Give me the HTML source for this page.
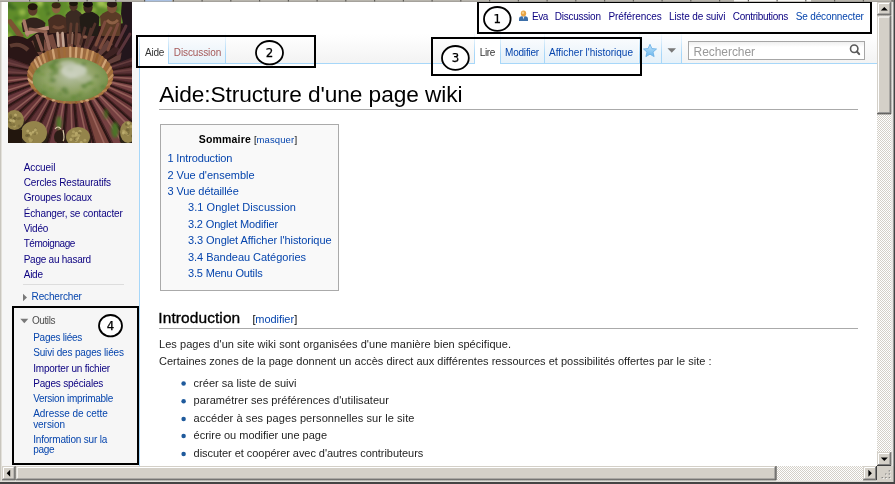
<!DOCTYPE html>
<html lang="fr"><head><meta charset="utf-8"><title>Aide:Structure d'une page wiki</title>
<style>
html,body{margin:0;padding:0}
body{width:895px;height:484px;overflow:hidden;position:relative;background:#fff;font-family:"Liberation Sans",sans-serif}
.abs{position:absolute;display:block}
.t{position:absolute;white-space:nowrap;line-height:1;display:block}
#page{position:absolute;left:0;top:0;width:895px;height:484px;overflow:hidden}
#side{left:2px;top:2px;width:137px;height:464px;background:#f6f6f6}
#sidefade{left:2px;top:2px;width:137px;height:62px;background:linear-gradient(#fff 0,#fff 40%,#f6f6f6 100%)}
#cborder{left:139px;top:63px;width:1px;height:403px;background:#a7d7f9}
#headline{left:139px;top:63px;width:738px;height:1px;background:#a7d7f9}
.box{position:absolute;border:solid #000;box-sizing:border-box}
.tab{position:absolute;top:32px;height:31px;background:linear-gradient(#fff 0,#f3f8fc 45%,#e6f1f9 100%)}
.tabsel{position:absolute;top:32px;height:32px;background:#fff}
.sep{position:absolute;top:32px;width:1px;height:32px;background:linear-gradient(rgba(167,215,249,0) 0,#a7d7f9 70%)}
.hfade{position:absolute;top:34px;height:29px;background:linear-gradient(#fff,#f3f3f3)}
</style></head><body><div id="page">
<!-- backgrounds -->
<div class="abs" id="side"></div><div class="abs" id="sidefade"></div>
<div class="abs" id="headline"></div><div class="abs" id="cborder"></div>
<div class="hfade" style="left:140px;width:737px"></div>
<!-- left tabs -->
<div class="tabsel" style="left:140px;width:28px"></div>
<div class="tab" style="left:169px;width:56px"></div>
<div class="sep" style="left:139px"></div><div class="sep" style="left:168px"></div><div class="sep" style="left:225px"></div>
<!-- right tabs -->
<div class="tabsel" style="left:475px;width:25px"></div>
<div class="tab" style="left:501px;width:43px"></div>
<div class="tab" style="left:545px;width:93px"></div>
<div class="tab" style="left:640px;width:21px"></div>
<div class="tab" style="left:662px;width:19px"></div>
<div class="sep" style="left:474px"></div><div class="sep" style="left:500px"></div><div class="sep" style="left:544px"></div><div class="sep" style="left:639px"></div><div class="sep" style="left:661px"></div><div class="sep" style="left:681px"></div>
<!-- star + arrow -->
<svg class="abs" style="left:642px;top:43px" width="16" height="15" viewBox="0 0 16 15"><defs><linearGradient id="sg" x1="0" y1="0" x2="0" y2="1"><stop offset="0" stop-color="#c4e3f9"/><stop offset="1" stop-color="#6cb8ee"/></linearGradient></defs><path d="M8 1.3 L9.9 5.6 L14.5 6 L11 9.1 L12.1 13.6 L8 11.2 L3.9 13.6 L5 9.1 L1.5 6 L6.1 5.6 Z" fill="url(#sg)" stroke="#6eb2e6" stroke-width="0.9" stroke-linejoin="round"/></svg>
<svg class="abs" style="left:667px;top:48px" width="10" height="6" viewBox="0 0 10 6"><path d="M0.5 0.3 H9 L4.75 4.8 Z" fill="#797979"/></svg>
<!-- search -->
<div class="abs" style="left:688px;top:41px;width:177px;height:19.3px;box-sizing:border-box;border:1px solid #a6a6a6;background:linear-gradient(#efefef 0,#fff 30%)"></div>
<svg class="abs" style="left:848px;top:43px" width="14" height="13" viewBox="0 0 14 13"><circle cx="6.2" cy="5.75" r="3.7" fill="none" stroke="#5a5a5a" stroke-width="1.6"/><path d="M8.9 8.5 L11.2 11.1" stroke="#5a5a5a" stroke-width="2" stroke-linecap="round"/></svg>
<!-- user icon -->
<svg class="abs" style="left:518px;top:10px" width="11" height="12" viewBox="0 0 11 12"><path d="M1 11 V8.6 Q1 6.5 3.4 6.2 H7.6 Q10 6.5 10 8.6 V11 Z" fill="#3d6fa9"/><path d="M4.6 6.3 L5.5 9.5 L6.4 6.3 Z" fill="#dfe8f2"/><ellipse cx="5.5" cy="3.6" rx="2.7" ry="3" fill="#e9a445"/><ellipse cx="5" cy="2.8" rx="1.2" ry="1.2" fill="#f6cf8a"/></svg>
<!-- title rule -->
<div class="abs" style="left:159px;top:109px;width:699px;height:1px;background:#aaa"></div>
<!-- toc -->
<div class="abs" style="left:160px;top:124px;width:179px;height:167px;box-sizing:border-box;border:1px solid #aaa;background:#f9f9f9"></div>
<!-- h2 rule -->
<div class="abs" style="left:159px;top:328px;width:699px;height:1px;background:#aaa"></div>
<!-- bullets -->
<svg class="abs" style="left:180px;top:378px" width="8" height="86" viewBox="0 0 8 86"><g fill="#1f5a9c"><circle cx="3.6" cy="5.6" r="2.25"/><circle cx="3.6" cy="23.3" r="2.25"/><circle cx="3.6" cy="41.1" r="2.25"/><circle cx="3.6" cy="58" r="2.25"/><circle cx="3.6" cy="76.1" r="2.25"/></g></svg>
<!-- sidebar rule + arrows -->
<div class="abs" style="left:23px;top:284px;width:101px;height:1px;background:#ddd"></div>
<svg class="abs" style="left:22px;top:293px" width="6" height="9" viewBox="0 0 6 9"><path d="M1 0.8 L5 4.5 L1 8.2 Z" fill="#797979"/></svg>
<svg class="abs" style="left:20px;top:318px" width="9" height="6" viewBox="0 0 9 6"><path d="M0.3 0.8 H8.3 L4.3 5.2 Z" fill="#797979"/></svg>
<svg class="abs" style="left:8px;top:2px" width="124" height="141" viewBox="0 0 124 141"><defs><filter id="b1" x="-5%" y="-5%" width="110%" height="110%"><feGaussianBlur stdDeviation="0.6"/></filter><filter id="b2" x="-20%" y="-20%" width="140%" height="140%"><feGaussianBlur stdDeviation="1.4"/></filter><filter id="b3" x="-20%" y="-20%" width="140%" height="140%"><feGaussianBlur stdDeviation="3"/></filter><radialGradient id="gr" cx="0.5" cy="0.45" r="0.62"><stop offset="0" stop-color="#b4bea0"/><stop offset="0.55" stop-color="#8fa264"/><stop offset="1" stop-color="#64843a"/></radialGradient><linearGradient id="leg" x1="0" x2="1"><stop offset="0" stop-color="#b47c5e"/><stop offset="0.25" stop-color="#8e4e44"/><stop offset="1" stop-color="#5e2c30"/></linearGradient><clipPath id="lc"><rect width="124" height="141"/></clipPath></defs><g clip-path="url(#lc)"><rect width="124" height="141" fill="#2c1715"/><g filter="url(#b2)"><rect x="-4" y="-4" width="132" height="48" fill="#5f8c2c"/><ellipse cx="56.1" cy="22.4" rx="4.8" ry="3.4" fill="#3f6a22"/><ellipse cx="106.0" cy="7.6" rx="4.4" ry="3.4" fill="#3f6a22"/><ellipse cx="98.3" cy="3.8" rx="2.9" ry="2.3" fill="#94b846"/><ellipse cx="78.7" cy="23.8" rx="3.2" ry="3.4" fill="#94b846"/><ellipse cx="76.3" cy="6.3" rx="2.0" ry="3.6" fill="#86ab3a"/><ellipse cx="4.4" cy="35.2" rx="3.8" ry="4.3" fill="#4c7a26"/><ellipse cx="54.6" cy="33.7" rx="3.6" ry="3.9" fill="#6f9a30"/><ellipse cx="0.6" cy="3.4" rx="4.0" ry="3.2" fill="#3f6a22"/><ellipse cx="123.5" cy="33.6" rx="4.1" ry="2.9" fill="#a3c452"/><ellipse cx="63.6" cy="1.2" rx="3.7" ry="2.3" fill="#86ab3a"/><ellipse cx="105.0" cy="15.5" rx="4.9" ry="4.5" fill="#86ab3a"/><ellipse cx="26.5" cy="37.1" rx="2.2" ry="3.1" fill="#94b846"/><ellipse cx="49.3" cy="2.9" rx="3.9" ry="4.3" fill="#4c7a26"/><ellipse cx="41.8" cy="12.4" rx="2.0" ry="3.2" fill="#86ab3a"/><ellipse cx="16.7" cy="28.3" rx="2.0" ry="3.4" fill="#6f9a30"/><ellipse cx="22.0" cy="22.4" rx="3.3" ry="2.6" fill="#94b846"/><ellipse cx="95.4" cy="16.8" rx="3.2" ry="3.2" fill="#a3c452"/><ellipse cx="0.1" cy="34.6" rx="4.9" ry="3.8" fill="#86ab3a"/><ellipse cx="26.1" cy="15.8" rx="4.6" ry="3.9" fill="#86ab3a"/><ellipse cx="5.2" cy="5.9" rx="3.3" ry="2.0" fill="#3f6a22"/><ellipse cx="40.8" cy="11.9" rx="2.2" ry="2.3" fill="#3f6a22"/><ellipse cx="78.9" cy="0.6" rx="3.1" ry="3.9" fill="#a3c452"/><ellipse cx="118.9" cy="19.3" rx="3.7" ry="4.6" fill="#a3c452"/><ellipse cx="77.8" cy="12.4" rx="2.7" ry="3.8" fill="#94b846"/><ellipse cx="23.5" cy="29.6" rx="4.8" ry="2.6" fill="#6f9a30"/><ellipse cx="109.4" cy="24.1" rx="3.3" ry="2.3" fill="#86ab3a"/><ellipse cx="63.5" cy="10.2" rx="4.2" ry="3.2" fill="#6f9a30"/><ellipse cx="102.1" cy="23.9" rx="2.9" ry="2.5" fill="#94b846"/><ellipse cx="121.2" cy="5.1" rx="3.4" ry="4.0" fill="#3f6a22"/><ellipse cx="76.2" cy="11.2" rx="4.8" ry="2.6" fill="#86ab3a"/><ellipse cx="8.6" cy="16.5" rx="2.7" ry="2.1" fill="#4c7a26"/><ellipse cx="45.7" cy="22.9" rx="2.4" ry="3.1" fill="#6f9a30"/><ellipse cx="121.6" cy="26.3" rx="4.1" ry="3.8" fill="#a3c452"/><ellipse cx="73.1" cy="36.9" rx="3.4" ry="3.1" fill="#4c7a26"/><ellipse cx="119.4" cy="0.9" rx="3.9" ry="3.4" fill="#94b846"/><ellipse cx="38.6" cy="5.5" rx="2.2" ry="3.4" fill="#4c7a26"/><ellipse cx="91.4" cy="36.0" rx="4.2" ry="4.1" fill="#4c7a26"/><ellipse cx="43.6" cy="27.4" rx="4.7" ry="4.6" fill="#6f9a30"/><ellipse cx="117.1" cy="1.2" rx="3.5" ry="2.0" fill="#94b846"/><ellipse cx="47.4" cy="23.3" rx="3.8" ry="2.2" fill="#94b846"/><ellipse cx="14.3" cy="10.3" rx="3.2" ry="3.0" fill="#94b846"/><ellipse cx="86.1" cy="18.3" rx="3.4" ry="3.6" fill="#3f6a22"/><ellipse cx="93.0" cy="1.2" rx="3.8" ry="3.4" fill="#a3c452"/><ellipse cx="118.7" cy="4.5" rx="4.3" ry="4.0" fill="#6f9a30"/><ellipse cx="31.7" cy="0.5" rx="2.9" ry="4.0" fill="#a3c452"/><ellipse cx="64.3" cy="30.2" rx="3.0" ry="4.8" fill="#6f9a30"/><ellipse cx="110.6" cy="13.1" rx="4.0" ry="2.6" fill="#6f9a30"/><ellipse cx="99.7" cy="30.2" rx="2.6" ry="2.6" fill="#a3c452"/><ellipse cx="72.3" cy="12.7" rx="2.4" ry="3.5" fill="#86ab3a"/><ellipse cx="88.2" cy="38.0" rx="2.8" ry="2.5" fill="#6f9a30"/><ellipse cx="58.4" cy="37.0" rx="4.5" ry="3.1" fill="#3f6a22"/><ellipse cx="61.2" cy="12.6" rx="4.5" ry="4.9" fill="#6f9a30"/><ellipse cx="39.7" cy="33.1" rx="2.8" ry="3.8" fill="#94b846"/><ellipse cx="87.9" cy="22.8" rx="2.9" ry="4.4" fill="#86ab3a"/><ellipse cx="79.5" cy="16.2" rx="2.6" ry="4.3" fill="#4c7a26"/><ellipse cx="29.4" cy="5.6" rx="2.1" ry="3.9" fill="#6f9a30"/><ellipse cx="13.5" cy="21.4" rx="3.9" ry="3.1" fill="#86ab3a"/><ellipse cx="84.9" cy="8.0" rx="3.4" ry="2.5" fill="#86ab3a"/><ellipse cx="93.6" cy="21.4" rx="2.1" ry="2.7" fill="#4c7a26"/><ellipse cx="66.9" cy="37.9" rx="3.5" ry="5.0" fill="#a3c452"/></g><g filter="url(#b1)"><path d="M18 38 L30 30 L42 26 L60 27 L92 24 L126 20 V62 H18 Z" fill="#2a1816"/><polygon points="24.6,62.8 26.7,60.0 10.1,50.0 6.5,55.5" fill="#744a3e"/><polygon points="28.2,58.5 31.1,56.0 16.9,43.4 12.1,48.3" fill="#7d5244"/><polygon points="32.9,54.7 36.5,52.6 25.3,38.1 19.5,42.1" fill="#6a4238"/><polygon points="38.7,51.5 42.8,49.9 34.8,34.2 28.2,37.3" fill="#744a3e"/><polygon points="45.3,49.1 49.8,48.0 45.0,31.9 37.9,33.9" fill="#744a3e"/><polygon points="52.4,47.5 57.2,46.9 55.6,31.1 48.1,32.1" fill="#7d5244"/><polygon points="59.9,46.7 64.7,46.7 66.0,31.8 58.6,31.8" fill="#744a3e"/><polygon points="67.4,46.9 72.2,47.5 76.5,32.1 69.0,31.1" fill="#744a3e"/><polygon points="74.8,48.0 79.3,49.1 86.7,33.9 79.6,31.9" fill="#5a3634"/><polygon points="81.8,49.9 85.9,51.5 96.4,37.3 89.8,34.2" fill="#4a2c2a"/><polygon points="88.1,52.6 91.7,54.7 105.1,42.1 99.3,38.1" fill="#64403a"/><polygon points="93.5,56.0 96.4,58.5 112.5,48.3 107.7,43.4" fill="#3e2424"/><polygon points="97.9,60.0 100.0,62.8 118.1,55.5 114.5,50.0" fill="#64403a"/><path d="M-2 18 L3 17 L16 34 L11 37 Z" fill="#7b5232"/><path d="M-2 36 Q10 30 24 40 L30 52 L22 62 L-2 58 Z" fill="#2a1815"/><path d="M2 44 Q12 40 20 48" stroke="#5d3a30" stroke-width="4" fill="none"/><path d="M13.5 21.0 Q25.5 10.0 37.5 21.0 L36.0 30.0 L15.0 30.0 Z" fill="#33241c"/><ellipse cx="24.7" cy="8.1" rx="4.8" ry="5.6" fill="#5d3b2a"/><ellipse cx="24.7" cy="4.8" rx="5.0" ry="3.5" fill="#241710"/><path d="M16 19 L19.5 33" stroke="#a87866" stroke-width="3.4" stroke-linecap="round" fill="none"/><path d="M19 31 L40 26" stroke="#b98a78" stroke-width="4" stroke-linecap="round" fill="none"/><path d="M22 27 L38 30" stroke="#8d5e4e" stroke-width="3.2" stroke-linecap="round" fill="none"/><path d="M29 34 L34 48" stroke="#8a5a4e" stroke-width="3.6" stroke-linecap="round" fill="none"/><path d="M37.5 32 L41.5 46.5" stroke="#9a6a5c" stroke-width="3.4" stroke-linecap="round" fill="none"/><path d="M24 34 L28 50 L36 50 L36 34 Z" fill="#2b1a16"/><path d="M29 34 L34 48" stroke="#8a5a4e" stroke-width="3.2" stroke-linecap="round" fill="none"/><path d="M40.0 18.0 Q50.0 7.0 60.0 18.0 L58.5 31.0 L41.5 31.0 Z" fill="#4a2e22"/><ellipse cx="48.2" cy="6.4" rx="4.2" ry="5.0" fill="#8c6242"/><ellipse cx="48.2" cy="3.3" rx="4.5" ry="3.1" fill="#3a2616"/><path d="M45 24 Q50 28 56 24" stroke="#6d4432" stroke-width="3" fill="none"/><path d="M49.5 31 L50.5 44 M54.5 31 L55.5 44" stroke="#c3a493" stroke-width="2.6" stroke-linecap="round" fill="none"/><path d="M57.5 13.0 Q66.0 2.0 74.5 13.0 L73.0 30.0 L59.0 30.0 Z" fill="#3a2a22"/><ellipse cx="65.5" cy="4.2" rx="4.1" ry="4.8" fill="#4f3226"/><ellipse cx="65.5" cy="1.2" rx="4.3" ry="3.0" fill="#1f1410"/><path d="M63 22 L61.5 41 M69 22 L67.5 42" stroke="#5e3b2f" stroke-width="2.8" stroke-linecap="round" fill="none"/><path d="M64.5 30 L64 42" stroke="#8a6a5a" stroke-width="1.4" fill="none"/><path d="M71.5 15.0 Q81.5 4.0 91.5 15.0 L90.0 34.0 L73.0 34.0 Z" fill="#241a18"/><ellipse cx="80.0" cy="5.4" rx="4.6" ry="5.4" fill="#3d2820"/><ellipse cx="80.0" cy="2.2" rx="4.9" ry="3.3" fill="#17100d"/><path d="M77 26 L72.5 42 M83 27 L78.5 43 M87 22 L82 34" stroke="#4f3129" stroke-width="2.8" stroke-linecap="round" fill="none"/><ellipse cx="77" cy="35" rx="2.2" ry="1.8" fill="#8a5a48"/><path d="M92.0 14.0 Q102.8 3.0 113.5 14.0 L112.0 34.0 L93.5 34.0 Z" fill="#5a3a26"/><ellipse cx="104.0" cy="5.4" rx="4.9" ry="5.8" fill="#7d5238"/><ellipse cx="104.0" cy="2.0" rx="5.2" ry="3.6" fill="#2a1b12"/><path d="M97 20 L88 43 M103 26 L92 46 M110 22 L100 48" stroke="#7c4c3c" stroke-width="3" stroke-linecap="round" fill="none"/><path d="M99 18 Q104 24 110 18" stroke="#8d6044" stroke-width="3" fill="none"/><path d="M114 -2 H126 V60 H112 Q118 30 113 12 Z" fill="#23151a"/><path d="M118 24 L108 44 M122 32 L110 52" stroke="#5a343a" stroke-width="3" stroke-linecap="round" fill="none"/></g><g filter="url(#b1)"><polygon points="103.3,74.0 102.8,77.3 165.8,88.7 167.3,74.4" fill="#5e3034"/><line x1="104.2" y1="75.2" x2="167.1" y2="79.4" stroke="#b07a6e" stroke-width="1.6" opacity="0.6"/><line x1="103.8" y1="77.4" x2="165.9" y2="88.0" stroke="#3a1c1e" stroke-width="1.2" opacity="0.7"/><polygon points="102.4,78.8 100.9,82.1 160.7,104.8 165.3,91.0" fill="#744042"/><line x1="102.9" y1="80.2" x2="163.9" y2="95.9" stroke="#b07a6e" stroke-width="1.6" opacity="0.6"/><line x1="101.9" y1="82.3" x2="161.0" y2="104.1" stroke="#3a1c1e" stroke-width="1.2" opacity="0.7"/><polygon points="100.1,83.5 97.8,86.5 152.3,119.8 159.7,107.0" fill="#683638"/><line x1="100.3" y1="85.0" x2="157.4" y2="111.6" stroke="#b07a6e" stroke-width="1.6" opacity="0.6"/><line x1="98.7" y1="86.9" x2="152.7" y2="119.2" stroke="#3a1c1e" stroke-width="1.2" opacity="0.7"/><polygon points="96.5,87.8 93.4,90.5 140.8,133.3 150.9,121.8" fill="#683638"/><line x1="96.3" y1="89.3" x2="147.6" y2="126.0" stroke="#b07a6e" stroke-width="1.6" opacity="0.6"/><line x1="94.2" y1="91.1" x2="141.4" y2="132.8" stroke="#3a1c1e" stroke-width="1.2" opacity="0.7"/><polygon points="91.8,91.6 87.9,93.9 126.7,144.7 139.0,135.0" fill="#744042"/><line x1="91.2" y1="93.2" x2="134.9" y2="138.6" stroke="#b07a6e" stroke-width="1.6" opacity="0.6"/><line x1="88.7" y1="94.6" x2="127.3" y2="144.3" stroke="#3a1c1e" stroke-width="1.2" opacity="0.7"/><polygon points="86.1,94.8 81.6,96.6 110.3,153.7 124.5,146.1" fill="#744042"/><line x1="85.1" y1="96.3" x2="119.7" y2="149.0" stroke="#b07a6e" stroke-width="1.6" opacity="0.6"/><line x1="82.2" y1="97.4" x2="111.1" y2="153.4" stroke="#3a1c1e" stroke-width="1.2" opacity="0.7"/><polygon points="79.5,97.3 74.7,98.5 92.3,159.9 107.9,154.7" fill="#7a443e"/><line x1="78.2" y1="98.6" x2="102.6" y2="156.8" stroke="#b07a6e" stroke-width="1.6" opacity="0.6"/><line x1="75.1" y1="99.4" x2="93.1" y2="159.7" stroke="#3a1c1e" stroke-width="1.2" opacity="0.7"/><polygon points="72.4,98.9 67.3,99.5 73.3,163.2 89.7,160.6" fill="#683638"/><line x1="70.8" y1="100.1" x2="84.0" y2="161.7" stroke="#b07a6e" stroke-width="1.6" opacity="0.6"/><line x1="67.5" y1="100.5" x2="74.2" y2="163.1" stroke="#3a1c1e" stroke-width="1.2" opacity="0.7"/><polygon points="64.9,99.6 59.7,99.6 54.0,163.4 70.6,163.4" fill="#5e3034"/><line x1="63.1" y1="100.7" x2="64.8" y2="163.7" stroke="#b07a6e" stroke-width="1.6" opacity="0.6"/><line x1="59.8" y1="100.7" x2="54.8" y2="163.5" stroke="#3a1c1e" stroke-width="1.2" opacity="0.7"/><polygon points="57.3,99.5 52.2,98.9 34.9,160.6 51.3,163.2" fill="#6a383e"/><line x1="55.4" y1="100.3" x2="45.5" y2="162.5" stroke="#b07a6e" stroke-width="1.6" opacity="0.6"/><line x1="52.1" y1="99.9" x2="35.7" y2="160.7" stroke="#3a1c1e" stroke-width="1.2" opacity="0.7"/><polygon points="49.9,98.5 45.1,97.3 16.7,154.7 32.3,159.9" fill="#5e3034"/><line x1="47.9" y1="99.0" x2="26.7" y2="158.3" stroke="#b07a6e" stroke-width="1.6" opacity="0.6"/><line x1="44.8" y1="98.2" x2="17.5" y2="155.0" stroke="#3a1c1e" stroke-width="1.2" opacity="0.7"/><polygon points="43.0,96.6 38.5,94.8 0.1,146.1 14.3,153.7" fill="#5e3034"/><line x1="40.9" y1="96.9" x2="9.2" y2="151.3" stroke="#b07a6e" stroke-width="1.6" opacity="0.6"/><line x1="38.1" y1="95.7" x2="0.8" y2="146.5" stroke="#3a1c1e" stroke-width="1.2" opacity="0.7"/><polygon points="36.7,93.9 32.8,91.6 -14.4,135.0 -2.1,144.7" fill="#683638"/><line x1="34.6" y1="93.9" x2="-6.6" y2="141.5" stroke="#b07a6e" stroke-width="1.6" opacity="0.6"/><line x1="32.2" y1="92.4" x2="-13.8" y2="135.6" stroke="#3a1c1e" stroke-width="1.2" opacity="0.7"/><polygon points="31.2,90.5 28.1,87.8 -26.3,121.8 -16.2,133.3" fill="#5e3034"/><line x1="29.3" y1="90.2" x2="-20.0" y2="129.4" stroke="#b07a6e" stroke-width="1.6" opacity="0.6"/><line x1="27.3" y1="88.4" x2="-25.8" y2="122.4" stroke="#3a1c1e" stroke-width="1.2" opacity="0.7"/><polygon points="26.8,86.5 24.5,83.5 -35.1,107.0 -27.7,119.8" fill="#6a383e"/><line x1="25.1" y1="85.9" x2="-30.5" y2="115.5" stroke="#b07a6e" stroke-width="1.6" opacity="0.6"/><line x1="23.7" y1="84.0" x2="-34.8" y2="107.6" stroke="#3a1c1e" stroke-width="1.2" opacity="0.7"/><polygon points="23.7,82.1 22.2,78.8 -40.7,91.0 -36.1,104.8" fill="#683638"/><line x1="22.1" y1="81.2" x2="-38.0" y2="100.0" stroke="#b07a6e" stroke-width="1.6" opacity="0.6"/><line x1="21.3" y1="79.1" x2="-40.5" y2="91.7" stroke="#3a1c1e" stroke-width="1.2" opacity="0.7"/><polygon points="21.8,77.3 21.3,74.0 -42.7,74.4 -41.2,88.7" fill="#683638"/><line x1="20.6" y1="76.3" x2="-42.0" y2="83.7" stroke="#b07a6e" stroke-width="1.6" opacity="0.6"/><line x1="20.3" y1="74.1" x2="-42.7" y2="75.1" stroke="#3a1c1e" stroke-width="1.2" opacity="0.7"/><polygon points="21.3,72.4 21.8,69.1 -41.2,57.7 -42.7,72.0" fill="#5a3234"/><line x1="20.4" y1="71.2" x2="-42.5" y2="67.0" stroke="#7a4a48" stroke-width="1.6" opacity="0.6"/><line x1="20.8" y1="69.0" x2="-41.3" y2="58.4" stroke="#3a1c1e" stroke-width="1.2" opacity="0.7"/><polygon points="22.2,67.6 23.7,64.3 -36.1,41.6 -40.7,55.4" fill="#5a3234"/><line x1="21.7" y1="66.2" x2="-39.3" y2="50.5" stroke="#7a4a48" stroke-width="1.6" opacity="0.6"/><line x1="22.7" y1="64.1" x2="-36.4" y2="42.3" stroke="#3a1c1e" stroke-width="1.2" opacity="0.7"/><polygon points="100.9,64.3 102.4,67.6 165.3,55.4 160.7,41.6" fill="#44262a"/><line x1="102.5" y1="65.2" x2="162.6" y2="46.4" stroke="#7a4a48" stroke-width="1.6" opacity="0.6"/><line x1="103.3" y1="67.3" x2="165.1" y2="54.7" stroke="#3a1c1e" stroke-width="1.2" opacity="0.7"/><polygon points="102.8,69.1 103.3,72.4 167.3,72.0 165.8,57.7" fill="#5a3234"/><line x1="104.0" y1="70.1" x2="166.6" y2="62.7" stroke="#7a4a48" stroke-width="1.6" opacity="0.6"/><line x1="104.3" y1="72.3" x2="167.3" y2="71.3" stroke="#3a1c1e" stroke-width="1.2" opacity="0.7"/></g><g filter="url(#b2)"><ellipse cx="51" cy="121" rx="2.6" ry="7" fill="#4f7a2a"/><ellipse cx="107" cy="128" rx="3.5" ry="8" fill="#4a7428"/><ellipse cx="98" cy="112" rx="1.8" ry="5" fill="#44681f"/></g><g filter="url(#b1)"><ellipse cx="62.3" cy="73.2" rx="43.0" ry="28.5" fill="#9c6a40"/><line x1="104.5" y1="73.2" x2="100.6" y2="77.4" stroke="#c4935e" stroke-width="2.3" stroke-linecap="round"/><line x1="104.1" y1="77.1" x2="100.2" y2="80.6" stroke="#ab7740" stroke-width="2.3" stroke-linecap="round"/><line x1="102.8" y1="81.0" x2="99.0" y2="83.7" stroke="#b98550" stroke-width="2.3" stroke-linecap="round"/><line x1="100.7" y1="84.7" x2="97.1" y2="86.7" stroke="#a06c38" stroke-width="2.3" stroke-linecap="round"/><line x1="97.8" y1="88.2" x2="94.5" y2="89.5" stroke="#b98550" stroke-width="2.3" stroke-linecap="round"/><line x1="94.2" y1="91.3" x2="91.2" y2="92.1" stroke="#ab7740" stroke-width="2.3" stroke-linecap="round"/><line x1="89.9" y1="94.1" x2="87.4" y2="94.3" stroke="#b98550" stroke-width="2.3" stroke-linecap="round"/><line x1="85.1" y1="96.5" x2="83.0" y2="96.2" stroke="#a06c38" stroke-width="2.3" stroke-linecap="round"/><line x1="79.8" y1="98.4" x2="78.2" y2="97.8" stroke="#cfa274" stroke-width="2.3" stroke-linecap="round"/><line x1="74.2" y1="99.8" x2="73.1" y2="98.9" stroke="#c4935e" stroke-width="2.3" stroke-linecap="round"/><line x1="68.3" y1="100.6" x2="67.8" y2="99.6" stroke="#94602f" stroke-width="2.3" stroke-linecap="round"/><line x1="62.3" y1="100.9" x2="62.3" y2="99.8" stroke="#a06c38" stroke-width="2.3" stroke-linecap="round"/><line x1="56.3" y1="100.6" x2="56.8" y2="99.6" stroke="#ab7740" stroke-width="2.3" stroke-linecap="round"/><line x1="50.4" y1="99.8" x2="51.5" y2="98.9" stroke="#a06c38" stroke-width="2.3" stroke-linecap="round"/><line x1="44.8" y1="98.4" x2="46.4" y2="97.8" stroke="#cfa274" stroke-width="2.3" stroke-linecap="round"/><line x1="39.5" y1="96.5" x2="41.6" y2="96.2" stroke="#94602f" stroke-width="2.3" stroke-linecap="round"/><line x1="34.7" y1="94.1" x2="37.2" y2="94.3" stroke="#cfa274" stroke-width="2.3" stroke-linecap="round"/><line x1="30.4" y1="91.3" x2="33.4" y2="92.1" stroke="#94602f" stroke-width="2.3" stroke-linecap="round"/><line x1="26.8" y1="88.2" x2="30.1" y2="89.5" stroke="#94602f" stroke-width="2.3" stroke-linecap="round"/><line x1="23.9" y1="84.7" x2="27.5" y2="86.7" stroke="#ab7740" stroke-width="2.3" stroke-linecap="round"/><line x1="21.8" y1="81.0" x2="25.6" y2="83.7" stroke="#ab7740" stroke-width="2.3" stroke-linecap="round"/><line x1="20.5" y1="77.1" x2="24.4" y2="80.6" stroke="#cfa274" stroke-width="2.3" stroke-linecap="round"/><line x1="20.1" y1="73.2" x2="24.0" y2="77.4" stroke="#94602f" stroke-width="2.3" stroke-linecap="round"/><line x1="20.5" y1="69.3" x2="24.4" y2="74.2" stroke="#b98550" stroke-width="2.3" stroke-linecap="round"/><line x1="21.8" y1="65.4" x2="25.6" y2="71.1" stroke="#a06c38" stroke-width="2.3" stroke-linecap="round"/><line x1="23.9" y1="61.7" x2="27.5" y2="68.1" stroke="#ab7740" stroke-width="2.3" stroke-linecap="round"/><line x1="26.8" y1="58.2" x2="30.1" y2="65.3" stroke="#cfa274" stroke-width="2.3" stroke-linecap="round"/><line x1="30.4" y1="55.1" x2="33.4" y2="62.7" stroke="#cfa274" stroke-width="2.3" stroke-linecap="round"/><line x1="34.7" y1="52.3" x2="37.2" y2="60.5" stroke="#c4935e" stroke-width="2.3" stroke-linecap="round"/><line x1="39.5" y1="49.9" x2="41.6" y2="58.6" stroke="#94602f" stroke-width="2.3" stroke-linecap="round"/><line x1="44.8" y1="48.0" x2="46.4" y2="57.0" stroke="#cfa274" stroke-width="2.3" stroke-linecap="round"/><line x1="50.4" y1="46.6" x2="51.5" y2="55.9" stroke="#94602f" stroke-width="2.3" stroke-linecap="round"/><line x1="56.3" y1="45.8" x2="56.8" y2="55.2" stroke="#a06c38" stroke-width="2.3" stroke-linecap="round"/><line x1="62.3" y1="45.5" x2="62.3" y2="55.0" stroke="#cfa274" stroke-width="2.3" stroke-linecap="round"/><line x1="68.3" y1="45.8" x2="67.8" y2="55.2" stroke="#cfa274" stroke-width="2.3" stroke-linecap="round"/><line x1="74.2" y1="46.6" x2="73.1" y2="55.9" stroke="#cfa274" stroke-width="2.3" stroke-linecap="round"/><line x1="79.8" y1="48.0" x2="78.2" y2="57.0" stroke="#c4935e" stroke-width="2.3" stroke-linecap="round"/><line x1="85.1" y1="49.9" x2="83.0" y2="58.6" stroke="#c4935e" stroke-width="2.3" stroke-linecap="round"/><line x1="89.9" y1="52.3" x2="87.4" y2="60.5" stroke="#94602f" stroke-width="2.3" stroke-linecap="round"/><line x1="94.2" y1="55.1" x2="91.2" y2="62.7" stroke="#ab7740" stroke-width="2.3" stroke-linecap="round"/><line x1="97.8" y1="58.2" x2="94.5" y2="65.3" stroke="#cfa274" stroke-width="2.3" stroke-linecap="round"/><line x1="100.7" y1="61.7" x2="97.1" y2="68.1" stroke="#a06c38" stroke-width="2.3" stroke-linecap="round"/><line x1="102.8" y1="65.4" x2="99.0" y2="71.1" stroke="#c4935e" stroke-width="2.3" stroke-linecap="round"/><line x1="104.1" y1="69.3" x2="100.2" y2="74.2" stroke="#a06c38" stroke-width="2.3" stroke-linecap="round"/><ellipse cx="62.3" cy="77.4" rx="37.8" ry="21.9" fill="url(#gr)"/></g><g filter="url(#b2)"><ellipse cx="88.7" cy="74.3" rx="2.6" ry="1.3" fill="#47702a" opacity="0.55"/><ellipse cx="75.2" cy="83.9" rx="2.3" ry="1.8" fill="#4f7a2a" opacity="0.55"/><ellipse cx="37.8" cy="76.0" rx="3.1" ry="1.8" fill="#8aa860" opacity="0.55"/><ellipse cx="79.1" cy="83.9" rx="3.4" ry="1.7" fill="#8aa860" opacity="0.55"/><ellipse cx="59.2" cy="92.3" rx="1.8" ry="1.7" fill="#8aa860" opacity="0.55"/><ellipse cx="43.5" cy="75.7" rx="2.3" ry="1.0" fill="#5a8430" opacity="0.55"/><ellipse cx="84.1" cy="90.8" rx="1.5" ry="1.3" fill="#6f9438" opacity="0.55"/><ellipse cx="84.6" cy="78.4" rx="2.9" ry="1.4" fill="#8aa860" opacity="0.55"/><ellipse cx="86.7" cy="88.3" rx="1.7" ry="1.8" fill="#5a8430" opacity="0.55"/><ellipse cx="56.2" cy="60.2" rx="3.3" ry="1.0" fill="#8aa860" opacity="0.55"/><ellipse cx="75.3" cy="62.6" rx="2.6" ry="2.3" fill="#47702a" opacity="0.55"/><ellipse cx="44.9" cy="65.4" rx="3.2" ry="1.9" fill="#6f9438" opacity="0.55"/><ellipse cx="65.7" cy="95.3" rx="3.1" ry="2.4" fill="#5a8430" opacity="0.55"/><ellipse cx="35.3" cy="65.6" rx="1.9" ry="2.2" fill="#6f9438" opacity="0.55"/><ellipse cx="77.2" cy="70.0" rx="2.0" ry="2.1" fill="#5a8430" opacity="0.55"/><ellipse cx="43.1" cy="86.9" rx="3.4" ry="1.8" fill="#6f9438" opacity="0.55"/><ellipse cx="71.1" cy="93.3" rx="3.1" ry="1.1" fill="#47702a" opacity="0.55"/><ellipse cx="48.2" cy="59.3" rx="3.4" ry="1.2" fill="#47702a" opacity="0.55"/><ellipse cx="46.7" cy="67.2" rx="3.5" ry="2.2" fill="#4f7a2a" opacity="0.55"/><ellipse cx="44.9" cy="78.5" rx="3.0" ry="1.9" fill="#47702a" opacity="0.55"/><ellipse cx="41.8" cy="78.8" rx="1.7" ry="1.3" fill="#6f9438" opacity="0.55"/><ellipse cx="96.8" cy="76.2" rx="1.7" ry="1.1" fill="#8aa860" opacity="0.55"/><ellipse cx="78.9" cy="82.5" rx="2.3" ry="1.6" fill="#5a8430" opacity="0.55"/><ellipse cx="36.6" cy="84.4" rx="1.5" ry="2.1" fill="#6f9438" opacity="0.55"/><ellipse cx="73.0" cy="90.9" rx="3.0" ry="1.6" fill="#6f9438" opacity="0.55"/><ellipse cx="47.4" cy="70.7" rx="3.1" ry="1.5" fill="#4f7a2a" opacity="0.55"/><ellipse cx="72.0" cy="60.7" rx="3.2" ry="1.9" fill="#8aa860" opacity="0.55"/><ellipse cx="43.6" cy="72.3" rx="2.7" ry="1.5" fill="#5a8430" opacity="0.55"/><ellipse cx="58.8" cy="88.3" rx="3.0" ry="1.2" fill="#8aa860" opacity="0.55"/><ellipse cx="77.9" cy="87.4" rx="2.6" ry="1.6" fill="#8aa860" opacity="0.55"/><ellipse cx="64.7" cy="63.2" rx="2.9" ry="1.1" fill="#5a8430" opacity="0.55"/><ellipse cx="56.3" cy="87.8" rx="3.3" ry="2.5" fill="#47702a" opacity="0.55"/><ellipse cx="83.4" cy="81.3" rx="3.4" ry="1.4" fill="#6f9438" opacity="0.55"/><ellipse cx="47.4" cy="63.8" rx="2.6" ry="1.6" fill="#8aa860" opacity="0.55"/><ellipse cx="43.3" cy="63.7" rx="3.0" ry="2.5" fill="#4f7a2a" opacity="0.55"/><ellipse cx="76.6" cy="84.7" rx="2.0" ry="1.7" fill="#47702a" opacity="0.55"/><ellipse cx="82.0" cy="81.1" rx="2.3" ry="1.1" fill="#5a8430" opacity="0.55"/><ellipse cx="58.5" cy="90.8" rx="2.6" ry="1.6" fill="#47702a" opacity="0.55"/><ellipse cx="29.7" cy="68.8" rx="2.8" ry="2.2" fill="#4f7a2a" opacity="0.55"/><ellipse cx="34.1" cy="72.2" rx="3.4" ry="1.6" fill="#6f9438" opacity="0.55"/><ellipse cx="35.7" cy="90.9" rx="3.2" ry="1.8" fill="#47702a" opacity="0.55"/><ellipse cx="94.8" cy="84.7" rx="2.3" ry="1.8" fill="#47702a" opacity="0.55"/><ellipse cx="52.0" cy="91.9" rx="2.5" ry="1.4" fill="#5a8430" opacity="0.55"/><ellipse cx="46.2" cy="62.0" rx="1.6" ry="2.2" fill="#47702a" opacity="0.55"/><ellipse cx="81.6" cy="80.5" rx="3.0" ry="1.6" fill="#5a8430" opacity="0.55"/><ellipse cx="62.1" cy="67.0" rx="3.5" ry="2.4" fill="#4f7a2a" opacity="0.55"/><ellipse cx="66" cy="69" rx="13" ry="7" fill="#d2d6c8" opacity="0.8"/><ellipse cx="60" cy="62" rx="8" ry="3.5" fill="#c2c8b4" opacity="0.7"/><ellipse cx="76" cy="76" rx="8" ry="4" fill="#b9c2a4" opacity="0.6"/></g><g filter="url(#b1)"><ellipse cx="6.5" cy="122.0" rx="10.5" ry="11.0" fill="#2b2016"/><ellipse cx="6.5" cy="118.0" rx="9.5" ry="10.0" fill="#94844c"/><circle cx="7.0" cy="116.3" r="1.5" fill="#6a5c30" opacity="0.7"/><circle cx="6.5" cy="124.0" r="1.5" fill="#b8a868" opacity="0.7"/><circle cx="-0.5" cy="116.9" r="1.5" fill="#6a5c30" opacity="0.7"/><circle cx="11.0" cy="124.0" r="1.5" fill="#7a6c3a" opacity="0.7"/><circle cx="5.8" cy="117.4" r="1.5" fill="#6a5c30" opacity="0.7"/><circle cx="5.0" cy="118.4" r="1.5" fill="#b8a868" opacity="0.7"/><circle cx="5.8" cy="119.0" r="1.5" fill="#c8b878" opacity="0.7"/><circle cx="1.7" cy="119.9" r="1.5" fill="#6a5c30" opacity="0.7"/><circle cx="2.6" cy="115.0" r="1.5" fill="#6a5c30" opacity="0.7"/><circle cx="2.8" cy="122.5" r="1.5" fill="#7a6c3a" opacity="0.7"/><circle cx="11.8" cy="116.3" r="1.5" fill="#7a6c3a" opacity="0.7"/><circle cx="2.7" cy="118.5" r="1.5" fill="#c8b878" opacity="0.7"/><circle cx="7.5" cy="113.1" r="1.5" fill="#c8b878" opacity="0.7"/><circle cx="5.8" cy="122.8" r="1.5" fill="#7a6c3a" opacity="0.7"/><circle cx="2.7" cy="113.5" r="1.5" fill="#7a6c3a" opacity="0.7"/><circle cx="10.1" cy="116.8" r="1.5" fill="#7a6c3a" opacity="0.7"/><ellipse cx="26.0" cy="135.0" rx="14.0" ry="13.0" fill="#2b2016"/><ellipse cx="26.0" cy="131.0" rx="13.0" ry="12.0" fill="#94844c"/><circle cx="26.3" cy="130.7" r="1.5" fill="#b8a868" opacity="0.7"/><circle cx="28.7" cy="131.1" r="1.5" fill="#b8a868" opacity="0.7"/><circle cx="25.2" cy="130.3" r="1.5" fill="#c8b878" opacity="0.7"/><circle cx="26.8" cy="131.4" r="1.5" fill="#7a6c3a" opacity="0.7"/><circle cx="19.8" cy="129.1" r="1.5" fill="#c8b878" opacity="0.7"/><circle cx="22.3" cy="131.3" r="1.5" fill="#c8b878" opacity="0.7"/><circle cx="21.7" cy="136.9" r="1.5" fill="#b8a868" opacity="0.7"/><circle cx="27.5" cy="126.9" r="1.5" fill="#7a6c3a" opacity="0.7"/><circle cx="18.7" cy="133.5" r="1.5" fill="#6a5c30" opacity="0.7"/><circle cx="27.4" cy="127.7" r="1.5" fill="#c8b878" opacity="0.7"/><circle cx="24.0" cy="138.0" r="1.5" fill="#7a6c3a" opacity="0.7"/><circle cx="22.5" cy="132.6" r="1.5" fill="#b8a868" opacity="0.7"/><circle cx="22.7" cy="131.7" r="1.5" fill="#b8a868" opacity="0.7"/><circle cx="20.6" cy="133.3" r="1.5" fill="#6a5c30" opacity="0.7"/><circle cx="23.6" cy="138.1" r="1.5" fill="#b8a868" opacity="0.7"/><circle cx="22.5" cy="139.1" r="1.5" fill="#b8a868" opacity="0.7"/><ellipse cx="70.0" cy="139.0" rx="13.0" ry="11.0" fill="#2b2016"/><ellipse cx="70.0" cy="135.0" rx="12.0" ry="10.0" fill="#94844c"/><circle cx="68.4" cy="131.3" r="1.5" fill="#c8b878" opacity="0.7"/><circle cx="69.7" cy="136.1" r="1.5" fill="#c8b878" opacity="0.7"/><circle cx="68.3" cy="132.8" r="1.5" fill="#b8a868" opacity="0.7"/><circle cx="68.1" cy="138.2" r="1.5" fill="#c8b878" opacity="0.7"/><circle cx="62.9" cy="137.4" r="1.5" fill="#c8b878" opacity="0.7"/><circle cx="67.9" cy="135.5" r="1.5" fill="#7a6c3a" opacity="0.7"/><circle cx="76.9" cy="138.3" r="1.5" fill="#b8a868" opacity="0.7"/><circle cx="67.5" cy="137.4" r="1.5" fill="#6a5c30" opacity="0.7"/><circle cx="72.0" cy="129.3" r="1.5" fill="#c8b878" opacity="0.7"/><circle cx="71.5" cy="130.9" r="1.5" fill="#7a6c3a" opacity="0.7"/><circle cx="73.2" cy="140.4" r="1.5" fill="#c8b878" opacity="0.7"/><circle cx="70.8" cy="133.4" r="1.5" fill="#b8a868" opacity="0.7"/><circle cx="64.8" cy="133.8" r="1.5" fill="#b8a868" opacity="0.7"/><circle cx="65.5" cy="129.8" r="1.5" fill="#b8a868" opacity="0.7"/><circle cx="67.4" cy="133.8" r="1.5" fill="#b8a868" opacity="0.7"/><circle cx="68.7" cy="136.9" r="1.5" fill="#b8a868" opacity="0.7"/><ellipse cx="120.0" cy="134.0" rx="9.0" ry="12.0" fill="#2b2016"/><ellipse cx="120.0" cy="130.0" rx="8.0" ry="11.0" fill="#94844c"/><circle cx="120.4" cy="129.6" r="1.5" fill="#7a6c3a" opacity="0.7"/><circle cx="124.3" cy="134.1" r="1.5" fill="#6a5c30" opacity="0.7"/><circle cx="120.0" cy="131.9" r="1.5" fill="#c8b878" opacity="0.7"/><circle cx="120.2" cy="126.5" r="1.5" fill="#c8b878" opacity="0.7"/><circle cx="120.8" cy="127.3" r="1.5" fill="#7a6c3a" opacity="0.7"/><circle cx="116.6" cy="130.2" r="1.5" fill="#b8a868" opacity="0.7"/><circle cx="118.5" cy="122.2" r="1.5" fill="#6a5c30" opacity="0.7"/><circle cx="120.3" cy="121.3" r="1.5" fill="#c8b878" opacity="0.7"/><circle cx="123.1" cy="124.4" r="1.5" fill="#b8a868" opacity="0.7"/><circle cx="124.7" cy="124.6" r="1.5" fill="#b8a868" opacity="0.7"/><circle cx="115.5" cy="129.1" r="1.5" fill="#b8a868" opacity="0.7"/><circle cx="117.6" cy="131.7" r="1.5" fill="#7a6c3a" opacity="0.7"/><circle cx="120.0" cy="131.4" r="1.5" fill="#6a5c30" opacity="0.7"/><circle cx="119.2" cy="127.4" r="1.5" fill="#6a5c30" opacity="0.7"/><circle cx="118.3" cy="131.2" r="1.5" fill="#b8a868" opacity="0.7"/><circle cx="115.4" cy="131.1" r="1.5" fill="#c8b878" opacity="0.7"/><path d="M-2 128 H14 V143 H-2 Z" fill="#20150f"/><ellipse cx="52" cy="135" rx="6" ry="7" fill="#2a1c14"/><path d="M47 127 q3 -4 6 0 M55 128 q2 9 0 11" stroke="#d8c8a8" stroke-width="1.2" fill="none"/></g></g></svg>
<!-- annotation boxes -->
<div class="box" style="left:476.7px;top:0.8px;width:395.5px;height:32.9px;border-width:2px"></div>
<div class="box" style="left:136.4px;top:35.2px;width:179.3px;height:33.3px;border-width:2.1px 2.1px 2.1px 2.6px"></div>
<div class="box" style="left:430.8px;top:37.2px;width:211.2px;height:39.2px;border-width:2.2px"></div>
<div class="box" style="left:11.7px;top:306.3px;width:127.1px;height:158.7px;border-width:2px"></div>
<div style="position:absolute;left:0;top:0;width:895px;height:484px;will-change:transform">
<svg class="abs" style="left:481.5px;top:5.1px" width="30.6" height="27.8"><ellipse cx="15.3" cy="13.9" rx="13.3" ry="11.9" fill="#fff" stroke="#000" stroke-width="1.8"/><text x="15.3" y="18.4" font-family="DejaVu Sans, sans-serif" font-size="11.8" text-anchor="middle" fill="#000" stroke="#000" stroke-width="0.25">1</text></svg>
<svg class="abs" style="left:254.2px;top:38.9px" width="31.0" height="27.4"><ellipse cx="15.5" cy="13.7" rx="13.5" ry="11.7" fill="#fff" stroke="#000" stroke-width="1.8"/><text x="15.5" y="18.2" font-family="DejaVu Sans, sans-serif" font-size="11.8" text-anchor="middle" fill="#000" stroke="#000" stroke-width="0.25">2</text></svg>
<svg class="abs" style="left:439.9px;top:44.2px" width="30.9" height="27.9"><ellipse cx="15.4" cy="13.9" rx="13.4" ry="11.9" fill="#fff" stroke="#000" stroke-width="1.8"/><text x="15.4" y="18.4" font-family="DejaVu Sans, sans-serif" font-size="11.8" text-anchor="middle" fill="#000" stroke="#000" stroke-width="0.25">3</text></svg>
<svg class="abs" style="left:97.4px;top:312.9px" width="27.0" height="25.4"><ellipse cx="13.5" cy="12.7" rx="11.5" ry="10.7" fill="#fff" stroke="#000" stroke-width="1.8"/><text x="13.5" y="17.2" font-family="DejaVu Sans, sans-serif" font-size="11.8" text-anchor="middle" fill="#000" stroke="#000" stroke-width="0.25">4</text></svg>

</div>
<div id="txt" style="position:absolute;left:0;top:0;width:895px;height:484px;will-change:transform">
<span class="t" style="left:532.00px;top:12.00px;font-size:10px;color:#0b0080;letter-spacing:-0.478px;">Eva</span>
<span class="t" style="left:554.70px;top:12.00px;font-size:10px;color:#0b0080;letter-spacing:-0.226px;">Discussion</span>
<span class="t" style="left:608.40px;top:12.00px;font-size:10px;color:#0b0080;letter-spacing:-0.057px;">Préférences</span>
<span class="t" style="left:669.00px;top:12.00px;font-size:10px;color:#0b0080;letter-spacing:-0.101px;">Liste de suivi</span>
<span class="t" style="left:732.80px;top:12.00px;font-size:10px;color:#0b0080;letter-spacing:-0.286px;">Contributions</span>
<span class="t" style="left:795.70px;top:12.00px;font-size:10px;color:#0645ad;letter-spacing:-0.140px;">Se déconnecter</span>
<span class="t" style="left:145.00px;top:48.00px;font-size:10px;color:#333;letter-spacing:-0.254px;">Aide</span>
<span class="t" style="left:173.80px;top:48.00px;font-size:10px;color:#a55858;letter-spacing:-0.106px;">Discussion</span>
<span class="t" style="left:479.80px;top:48.00px;font-size:10px;color:#333;letter-spacing:-0.372px;">Lire</span>
<span class="t" style="left:505.00px;top:48.00px;font-size:10px;color:#0645ad;letter-spacing:-0.197px;">Modifier</span>
<span class="t" style="left:549.00px;top:48.00px;font-size:10px;color:#0645ad;letter-spacing:0.000px;">Afficher l'historique</span>
<span class="t" style="left:693.60px;top:46.00px;font-size:12px;color:#999;letter-spacing:-0.063px;">Rechercher</span>
<span class="t" style="left:159.30px;top:83.00px;font-size:22.7px;color:#000;letter-spacing:-0.088px;">Aide:Structure d'une page wiki</span>
<span class="t" style="left:198.70px;top:134.00px;font-size:10.5px;color:#000;letter-spacing:0.190px;font-weight:bold;">Sommaire</span>
<span class="t" style="left:254.00px;top:135.00px;font-size:9.5px;color:#000;letter-spacing:0.000px;">[</span>
<span class="t" style="left:256.60px;top:135.00px;font-size:9.5px;color:#0645ad;letter-spacing:0.090px;">masquer</span>
<span class="t" style="left:294.40px;top:135.00px;font-size:9.5px;color:#000;letter-spacing:0.000px;">]</span>
<span class="t" style="left:167.40px;top:153.00px;font-size:11px;color:#0645ad;letter-spacing:-0.133px;">1 Introduction</span>
<span class="t" style="left:167.40px;top:170.00px;font-size:11px;color:#0645ad;letter-spacing:-0.007px;">2 Vue d'ensemble</span>
<span class="t" style="left:167.40px;top:186.00px;font-size:11px;color:#0645ad;letter-spacing:-0.072px;">3 Vue détaillée</span>
<span class="t" style="left:188.00px;top:202.00px;font-size:11px;color:#0645ad;letter-spacing:0.048px;">3.1 Onglet Discussion</span>
<span class="t" style="left:188.00px;top:219.00px;font-size:11px;color:#0645ad;letter-spacing:-0.155px;">3.2 Onglet Modifier</span>
<span class="t" style="left:188.00px;top:235.00px;font-size:11px;color:#0645ad;letter-spacing:-0.066px;">3.3 Onglet Afficher l'historique</span>
<span class="t" style="left:188.00px;top:252.00px;font-size:11px;color:#0645ad;letter-spacing:-0.030px;">3.4 Bandeau Catégories</span>
<span class="t" style="left:188.00px;top:268.00px;font-size:11px;color:#0645ad;letter-spacing:-0.170px;">3.5 Menu Outils</span>
<span class="t" style="left:158.30px;top:310.00px;font-size:15.5px;color:#000;letter-spacing:0.083px;-webkit-text-stroke:0.35px #000;">Introduction</span>
<span class="t" style="left:252.40px;top:314.00px;font-size:11px;color:#000;letter-spacing:0.000px;">[</span>
<span class="t" style="left:255.30px;top:314.00px;font-size:11px;color:#0645ad;letter-spacing:-0.053px;">modifier</span>
<span class="t" style="left:294.20px;top:314.00px;font-size:11px;color:#000;letter-spacing:0.000px;">]</span>
<span class="t" style="left:159.00px;top:339.00px;font-size:11px;color:#1e1e1e;letter-spacing:0.050px;">Les pages d'un site wiki sont organisées d'une manière bien spécifique.</span>
<span class="t" style="left:159.00px;top:356.00px;font-size:11px;color:#1e1e1e;letter-spacing:0.012px;">Certaines zones de la page donnent un accès direct aux différentes ressources et possibilités offertes par le site :</span>
<span class="t" style="left:193.60px;top:378.00px;font-size:11px;color:#1e1e1e;letter-spacing:0.008px;">créer sa liste de suivi</span>
<span class="t" style="left:193.60px;top:395.00px;font-size:11px;color:#1e1e1e;letter-spacing:0.048px;">paramétrer ses préférences d'utilisateur</span>
<span class="t" style="left:193.60px;top:413.00px;font-size:11px;color:#1e1e1e;letter-spacing:0.087px;">accéder à ses pages personnelles sur le site</span>
<span class="t" style="left:193.60px;top:430.00px;font-size:11px;color:#1e1e1e;letter-spacing:-0.019px;">écrire ou modifier une page</span>
<span class="t" style="left:193.60px;top:448.00px;font-size:11px;color:#1e1e1e;letter-spacing:-0.050px;">discuter et coopérer avec d'autres contributeurs</span>
<span class="t" style="left:23.70px;top:163.00px;font-size:10px;color:#0b0080;letter-spacing:-0.093px;">Accueil</span>
<span class="t" style="left:23.70px;top:178.00px;font-size:10px;color:#0b0080;letter-spacing:-0.137px;">Cercles Restauratifs</span>
<span class="t" style="left:23.70px;top:193.00px;font-size:10px;color:#0b0080;letter-spacing:-0.139px;">Groupes locaux</span>
<span class="t" style="left:23.70px;top:209.00px;font-size:10px;color:#0b0080;letter-spacing:-0.150px;">Échanger, se contacter</span>
<span class="t" style="left:23.70px;top:224.00px;font-size:10px;color:#0b0080;letter-spacing:-0.181px;">Vidéo</span>
<span class="t" style="left:23.70px;top:239.00px;font-size:10px;color:#0b0080;letter-spacing:-0.439px;">Témoignage</span>
<span class="t" style="left:23.70px;top:255.00px;font-size:10px;color:#0b0080;letter-spacing:-0.245px;">Page au hasard</span>
<span class="t" style="left:23.70px;top:270.00px;font-size:10px;color:#0b0080;letter-spacing:-0.229px;">Aide</span>
<span class="t" style="left:31.60px;top:292.00px;font-size:10px;color:#0645ad;letter-spacing:-0.150px;">Rechercher</span>
<span class="t" style="left:32.00px;top:316.00px;font-size:10px;color:#4d4d4d;letter-spacing:-0.427px;">Outils</span>
<span class="t" style="left:33.20px;top:333.00px;font-size:10px;color:#0645ad;letter-spacing:-0.264px;">Pages liées</span>
<span class="t" style="left:33.20px;top:348.00px;font-size:10px;color:#0645ad;letter-spacing:-0.160px;">Suivi des pages liées</span>
<span class="t" style="left:33.20px;top:364.00px;font-size:10px;color:#0b0080;letter-spacing:-0.200px;">Importer un fichier</span>
<span class="t" style="left:33.20px;top:379.00px;font-size:10px;color:#0b0080;letter-spacing:-0.189px;">Pages spéciales</span>
<span class="t" style="left:33.20px;top:394.00px;font-size:10px;color:#0645ad;letter-spacing:-0.286px;">Version imprimable</span>
<span class="t" style="left:33.20px;top:409.00px;font-size:10px;color:#0645ad;letter-spacing:-0.022px;">Adresse de cette</span>
<span class="t" style="left:33.20px;top:420.00px;font-size:10px;color:#0645ad;letter-spacing:-0.064px;">version</span>
<span class="t" style="left:33.20px;top:435.00px;font-size:10px;color:#0645ad;letter-spacing:-0.187px;">Information sur la</span>
<span class="t" style="left:33.20px;top:445.00px;font-size:10px;color:#0645ad;letter-spacing:-0.312px;">page</span>
</div>
<!-- browser chrome -->
<svg class="abs" style="left:0;top:0" width="895" height="484" viewBox="0 0 895 484" shape-rendering="auto"><defs><pattern id="chk" width="2" height="2" patternUnits="userSpaceOnUse"><rect width="2" height="2" fill="#fff"/><rect width="1" height="1" fill="#d4d0c8"/><rect x="1" y="1" width="1" height="1" fill="#d4d0c8"/></pattern></defs><rect x="0" y="0" width="1" height="484" fill="#c9c6be"/><rect x="1" y="0" width="1" height="484" fill="#e3e1db"/><rect x="0" y="0" width="895" height="1" fill="#b7b4ac"/><rect x="0" y="1" width="895" height="1" fill="#a5a29c"/><rect x="144.5" y="0" width="27.5" height="1.4" fill="#a9c0e2"/><rect x="734" y="0" width="77" height="1.4" fill="#f4f3f0"/><rect x="29.0" y="0" width="1.2" height="1.5" fill="#5e5c58"/><rect x="57.8" y="0" width="1.2" height="1.5" fill="#5e5c58"/><rect x="86.5" y="0" width="1.2" height="1.5" fill="#5e5c58"/><rect x="115.2" y="0" width="1.2" height="1.5" fill="#5e5c58"/><rect x="144.0" y="0" width="1.2" height="1.5" fill="#5e5c58"/><rect x="172.8" y="0" width="1.2" height="1.5" fill="#5e5c58"/><rect x="201.5" y="0" width="1.2" height="1.5" fill="#5e5c58"/><rect x="230.2" y="0" width="1.2" height="1.5" fill="#5e5c58"/><rect x="259.0" y="0" width="1.2" height="1.5" fill="#5e5c58"/><rect x="287.8" y="0" width="1.2" height="1.5" fill="#5e5c58"/><rect x="316.5" y="0" width="1.2" height="1.5" fill="#5e5c58"/><rect x="345.2" y="0" width="1.2" height="1.5" fill="#5e5c58"/><rect x="374.0" y="0" width="1.2" height="1.5" fill="#5e5c58"/><rect x="402.8" y="0" width="1.2" height="1.5" fill="#5e5c58"/><rect x="431.5" y="0" width="1.2" height="1.5" fill="#5e5c58"/><rect x="460.2" y="0" width="1.2" height="1.5" fill="#5e5c58"/><rect x="489.0" y="0" width="1.2" height="1.5" fill="#5e5c58"/><rect x="517.8" y="0" width="1.2" height="1.5" fill="#5e5c58"/><rect x="546.5" y="0" width="1.2" height="1.5" fill="#5e5c58"/><rect x="575.2" y="0" width="1.2" height="1.5" fill="#5e5c58"/><rect x="604.0" y="0" width="1.2" height="1.5" fill="#5e5c58"/><rect x="632.8" y="0" width="1.2" height="1.5" fill="#5e5c58"/><rect x="661.5" y="0" width="1.2" height="1.5" fill="#5e5c58"/><rect x="690.2" y="0" width="1.2" height="1.5" fill="#5e5c58"/><rect x="719.0" y="0" width="1.2" height="1.5" fill="#5e5c58"/><rect x="747.8" y="0" width="1.2" height="1.5" fill="#5e5c58"/><rect x="776.5" y="0" width="1.2" height="1.5" fill="#5e5c58"/><rect x="805.2" y="0" width="1.2" height="1.5" fill="#5e5c58"/><rect x="834.0" y="0" width="1.2" height="1.5" fill="#5e5c58"/><rect x="862.8" y="0" width="1.2" height="1.5" fill="#5e5c58"/><rect x="891.5" y="0" width="1.2" height="1.5" fill="#5e5c58"/><rect x="877" y="2" width="14.5" height="464" fill="url(#chk)"/><rect x="877.00" y="2.00" width="14.50" height="13.50" fill="#d4d0c8"/><path d="M878.50 14.00 V3.50 H890.00" stroke="#fff" stroke-width="1" fill="none"/><path d="M878.00 14.00 H890.00 V3.00" stroke="#808080" stroke-width="1" fill="none"/><path d="M877.00 15.00 H891.00 V2.00" stroke="#404040" stroke-width="1" fill="none"/><path d="M880.8 10.6 H887.8 L884.3 7.1 Z" fill="#000"/><rect x="877.00" y="15.50" width="14.50" height="98.80" fill="#d4d0c8"/><path d="M878.50 112.80 V17.00 H890.00" stroke="#fff" stroke-width="1" fill="none"/><path d="M878.00 112.80 H890.00 V16.50" stroke="#808080" stroke-width="1" fill="none"/><path d="M877.00 113.80 H891.00 V15.50" stroke="#404040" stroke-width="1" fill="none"/><rect x="877.00" y="452.00" width="14.50" height="14.00" fill="#d4d0c8"/><path d="M878.50 464.50 V453.50 H890.00" stroke="#fff" stroke-width="1" fill="none"/><path d="M878.00 464.50 H890.00 V453.00" stroke="#808080" stroke-width="1" fill="none"/><path d="M877.00 465.50 H891.00 V452.00" stroke="#404040" stroke-width="1" fill="none"/><path d="M880.8 457.4 H887.8 L884.3 460.9 Z" fill="#000"/><rect x="2" y="466" width="875" height="14.5" fill="url(#chk)"/><rect x="2.00" y="466.00" width="13.70" height="14.50" fill="#d4d0c8"/><path d="M3.50 479.00 V467.50 H14.20" stroke="#fff" stroke-width="1" fill="none"/><path d="M3.00 479.00 H14.20 V467.00" stroke="#808080" stroke-width="1" fill="none"/><path d="M2.00 480.00 H15.20 V466.00" stroke="#404040" stroke-width="1" fill="none"/><path d="M10.2 469.8 V476.8 L6.7 473.3 Z" fill="#000"/><rect x="15.70" y="466.00" width="760.80" height="14.50" fill="#d4d0c8"/><path d="M17.20 479.00 V467.50 H775.00" stroke="#fff" stroke-width="1" fill="none"/><path d="M16.70 479.00 H775.00 V467.00" stroke="#808080" stroke-width="1" fill="none"/><path d="M15.70 480.00 H776.00 V466.00" stroke="#404040" stroke-width="1" fill="none"/><rect x="863.00" y="466.00" width="14.00" height="14.50" fill="#d4d0c8"/><path d="M864.50 479.00 V467.50 H875.50" stroke="#fff" stroke-width="1" fill="none"/><path d="M864.00 479.00 H875.50 V467.00" stroke="#808080" stroke-width="1" fill="none"/><path d="M863.00 480.00 H876.50 V466.00" stroke="#404040" stroke-width="1" fill="none"/><path d="M868.4 469.8 V476.8 L871.9 473.3 Z" fill="#000"/><rect x="877" y="466" width="16.5" height="16" fill="#d4d0c8"/><rect x="888.7" y="470.3" width="1.3" height="1.3" fill="#808080"/><rect x="889.7" y="471.3" width="1" height="1" fill="#fff"/><rect x="885.2" y="473.4" width="1.3" height="1.3" fill="#808080"/><rect x="886.2" y="474.4" width="1" height="1" fill="#fff"/><rect x="888.7" y="473.4" width="1.3" height="1.3" fill="#808080"/><rect x="889.7" y="474.4" width="1" height="1" fill="#fff"/><rect x="881.6" y="477.0" width="1.3" height="1.3" fill="#808080"/><rect x="882.6" y="478.0" width="1" height="1" fill="#fff"/><rect x="885.2" y="477.0" width="1.3" height="1.3" fill="#808080"/><rect x="886.2" y="478.0" width="1" height="1" fill="#fff"/><rect x="888.7" y="477.0" width="1.3" height="1.3" fill="#808080"/><rect x="889.7" y="478.0" width="1" height="1" fill="#fff"/><rect x="891.5" y="2" width="2" height="464" fill="#e6e4df"/><rect x="893.5" y="0" width="1.5" height="484" fill="#444"/><rect x="0" y="480.5" width="877" height="1.5" fill="#e0ded8"/><rect x="0" y="482" width="895" height="2" fill="#444"/></svg>
</div></body></html>
